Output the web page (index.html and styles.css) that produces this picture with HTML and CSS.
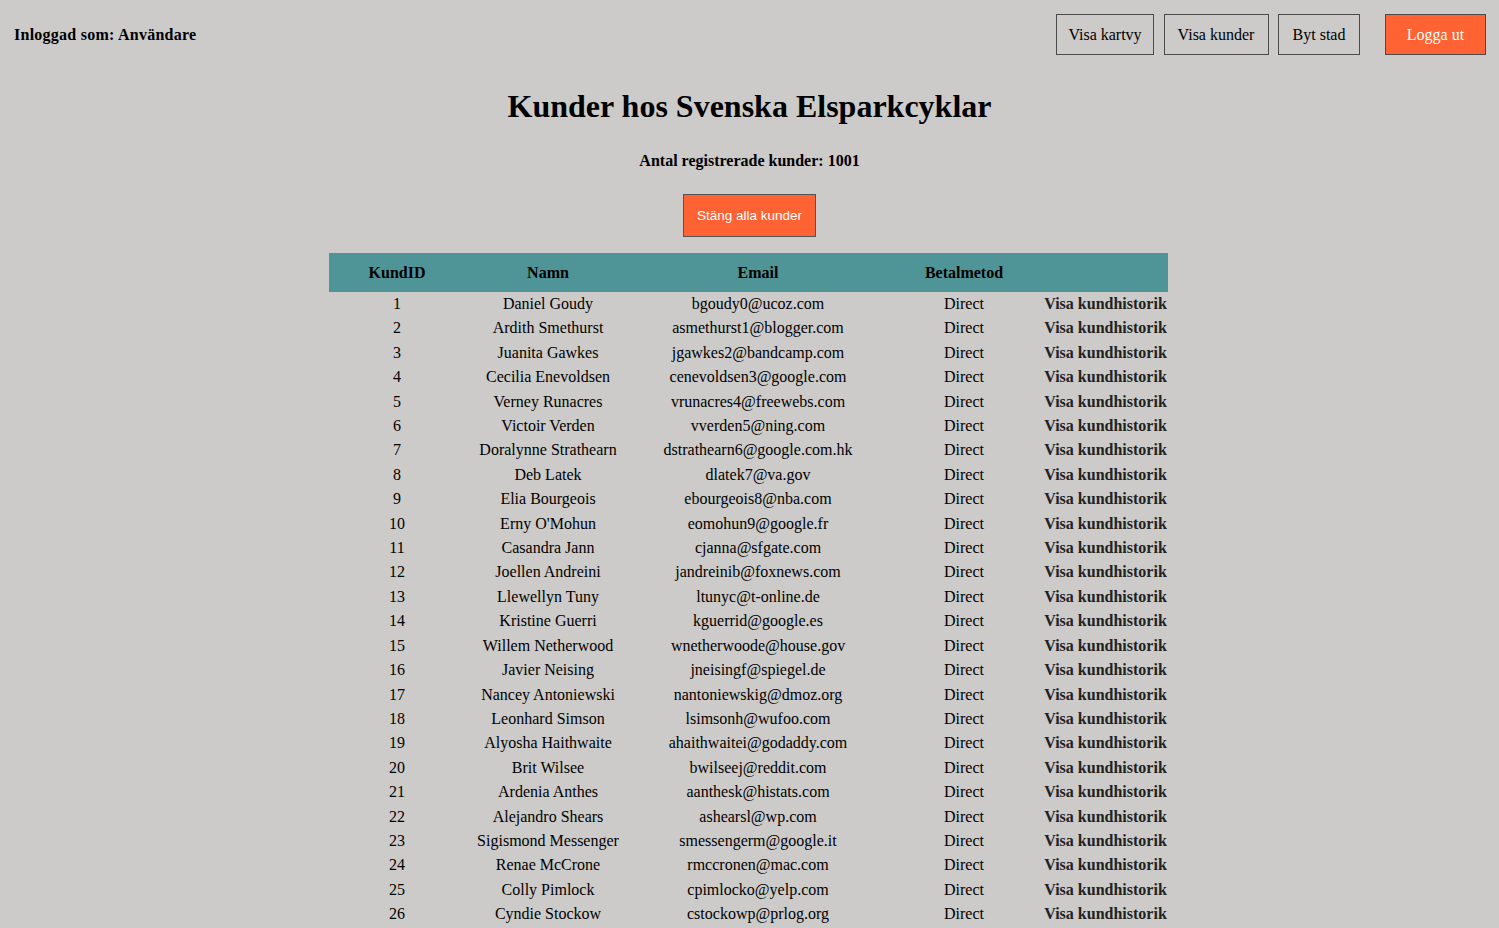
FILE: index.html
```html
<!DOCTYPE html>
<html lang="sv">
<head>
<meta charset="utf-8">
<title>Kunder hos Svenska Elsparkcyklar</title>
<link rel="stylesheet" href="styles.css">
</head>
<body>
<header class="topbar">
  <div class="user">Inloggad som: Användare</div>
  <nav class="nav">
    <button class="nav-btn map">Visa kartvy</button>
    <button class="nav-btn cust">Visa kunder</button>
    <button class="nav-btn city">Byt stad</button>
    <button class="nav-btn logout">Logga ut</button>
  </nav>
</header>
<main class="content">
  <h1 class="title">Kunder hos Svenska Elsparkcyklar</h1>
  <p class="count">Antal registrerade kunder: 1001</p>
  <button class="close-btn">Stäng alla kunder</button>
  <table class="customers">
    <colgroup>
      <col class="c-id"><col class="c-name"><col class="c-email"><col class="c-pay"><col class="c-link">
    </colgroup>
    <thead>
      <tr><th>KundID</th><th>Namn</th><th>Email</th><th>Betalmetod</th><th></th></tr>
    </thead>
    <tbody>
      <tr><td>1</td><td>Daniel Goudy</td><td>bgoudy0@ucoz.com</td><td>Direct</td><td><span class="hist">Visa kundhistorik</span></td></tr>
      <tr><td>2</td><td>Ardith Smethurst</td><td>asmethurst1@blogger.com</td><td>Direct</td><td><span class="hist">Visa kundhistorik</span></td></tr>
      <tr><td>3</td><td>Juanita Gawkes</td><td>jgawkes2@bandcamp.com</td><td>Direct</td><td><span class="hist">Visa kundhistorik</span></td></tr>
      <tr><td>4</td><td>Cecilia Enevoldsen</td><td>cenevoldsen3@google.com</td><td>Direct</td><td><span class="hist">Visa kundhistorik</span></td></tr>
      <tr><td>5</td><td>Verney Runacres</td><td>vrunacres4@freewebs.com</td><td>Direct</td><td><span class="hist">Visa kundhistorik</span></td></tr>
      <tr><td>6</td><td>Victoir Verden</td><td>vverden5@ning.com</td><td>Direct</td><td><span class="hist">Visa kundhistorik</span></td></tr>
      <tr><td>7</td><td>Doralynne Strathearn</td><td>dstrathearn6@google.com.hk</td><td>Direct</td><td><span class="hist">Visa kundhistorik</span></td></tr>
      <tr><td>8</td><td>Deb Latek</td><td>dlatek7@va.gov</td><td>Direct</td><td><span class="hist">Visa kundhistorik</span></td></tr>
      <tr><td>9</td><td>Elia Bourgeois</td><td>ebourgeois8@nba.com</td><td>Direct</td><td><span class="hist">Visa kundhistorik</span></td></tr>
      <tr><td>10</td><td>Erny O'Mohun</td><td>eomohun9@google.fr</td><td>Direct</td><td><span class="hist">Visa kundhistorik</span></td></tr>
      <tr><td>11</td><td>Casandra Jann</td><td>cjanna@sfgate.com</td><td>Direct</td><td><span class="hist">Visa kundhistorik</span></td></tr>
      <tr><td>12</td><td>Joellen Andreini</td><td>jandreinib@foxnews.com</td><td>Direct</td><td><span class="hist">Visa kundhistorik</span></td></tr>
      <tr><td>13</td><td>Llewellyn Tuny</td><td>ltunyc@t-online.de</td><td>Direct</td><td><span class="hist">Visa kundhistorik</span></td></tr>
      <tr><td>14</td><td>Kristine Guerri</td><td>kguerrid@google.es</td><td>Direct</td><td><span class="hist">Visa kundhistorik</span></td></tr>
      <tr><td>15</td><td>Willem Netherwood</td><td>wnetherwoode@house.gov</td><td>Direct</td><td><span class="hist">Visa kundhistorik</span></td></tr>
      <tr><td>16</td><td>Javier Neising</td><td>jneisingf@spiegel.de</td><td>Direct</td><td><span class="hist">Visa kundhistorik</span></td></tr>
      <tr><td>17</td><td>Nancey Antoniewski</td><td>nantoniewskig@dmoz.org</td><td>Direct</td><td><span class="hist">Visa kundhistorik</span></td></tr>
      <tr><td>18</td><td>Leonhard Simson</td><td>lsimsonh@wufoo.com</td><td>Direct</td><td><span class="hist">Visa kundhistorik</span></td></tr>
      <tr><td>19</td><td>Alyosha Haithwaite</td><td>ahaithwaitei@godaddy.com</td><td>Direct</td><td><span class="hist">Visa kundhistorik</span></td></tr>
      <tr><td>20</td><td>Brit Wilsee</td><td>bwilseej@reddit.com</td><td>Direct</td><td><span class="hist">Visa kundhistorik</span></td></tr>
      <tr><td>21</td><td>Ardenia Anthes</td><td>aanthesk@histats.com</td><td>Direct</td><td><span class="hist">Visa kundhistorik</span></td></tr>
      <tr><td>22</td><td>Alejandro Shears</td><td>ashearsl@wp.com</td><td>Direct</td><td><span class="hist">Visa kundhistorik</span></td></tr>
      <tr><td>23</td><td>Sigismond Messenger</td><td>smessengerm@google.it</td><td>Direct</td><td><span class="hist">Visa kundhistorik</span></td></tr>
      <tr><td>24</td><td>Renae McCrone</td><td>rmccronen@mac.com</td><td>Direct</td><td><span class="hist">Visa kundhistorik</span></td></tr>
      <tr><td>25</td><td>Colly Pimlock</td><td>cpimlocko@yelp.com</td><td>Direct</td><td><span class="hist">Visa kundhistorik</span></td></tr>
      <tr><td>26</td><td>Cyndie Stockow</td><td>cstockowp@prlog.org</td><td>Direct</td><td><span class="hist">Visa kundhistorik</span></td></tr>
    </tbody>
  </table>
</main>
</body>
</html>
```
FILE: styles.css
```css
html, body {
  margin: 0;
  padding: 0;
  background: #cccbc9;
  color: #000;
  font-family: "Liberation Serif", "Times New Roman", serif;
  font-size: 16px;
}

.topbar {
  display: flex;
  justify-content: space-between;
  align-items: center;
  padding: 14px 13px 0 14px;
}

.user {
  font-weight: bold;
  letter-spacing: 0.25px;
}

.nav {
  display: flex;
  align-items: center;
}

.nav-btn {
  box-sizing: border-box;
  height: 41px;
  padding: 0;
  margin-left: 9.5px;
  background: transparent;
  border: 1px solid #4a4a4a;
  border-radius: 0;
  font-family: "Liberation Serif", "Times New Roman", serif;
  font-size: 16px;
  color: #000;
  text-align: center;
}

.nav-btn.map { width: 98px; }
.nav-btn.cust { width: 105px; }
.nav-btn.city { width: 82px; }

.nav-btn.logout {
  width: 101px;
  margin-left: 25px;
  background: #ff6233;
  color: #fff;
}

.content {
  display: flex;
  flex-direction: column;
  align-items: center;
}

.title {
  margin: 33px 0 0;
  font-size: 32px;
  line-height: 37px;
  font-weight: bold;
}

.count {
  margin: 27px 0 0;
  font-weight: bold;
  line-height: 18px;
}

.close-btn {
  box-sizing: border-box;
  margin-top: 24px;
  width: 133px;
  height: 43px;
  padding: 0;
  background: #ff6233;
  color: #fff;
  border: 1px solid #555;
  border-radius: 0;
  font-family: "Liberation Sans", Arial, sans-serif;
  font-size: 13.5px;
}

.customers {
  margin: 16px 2px 0 0;
  width: 839px;
  table-layout: fixed;
  border-collapse: collapse;
}

.c-id { width: 136px; }
.c-name { width: 166px; }
.c-email { width: 254px; }
.c-pay { width: 158px; }
.c-link { width: 125px; }

.customers th {
  background: #4f9598;
  padding: 10px 0;
  line-height: 19px;
  font-weight: bold;
  text-align: center;
}

.customers td {
  padding: 3px 0;
  line-height: 18.4px;
  text-align: center;
  white-space: nowrap;
}

.hist {
  font-weight: bold;
  color: #222;
}
```
